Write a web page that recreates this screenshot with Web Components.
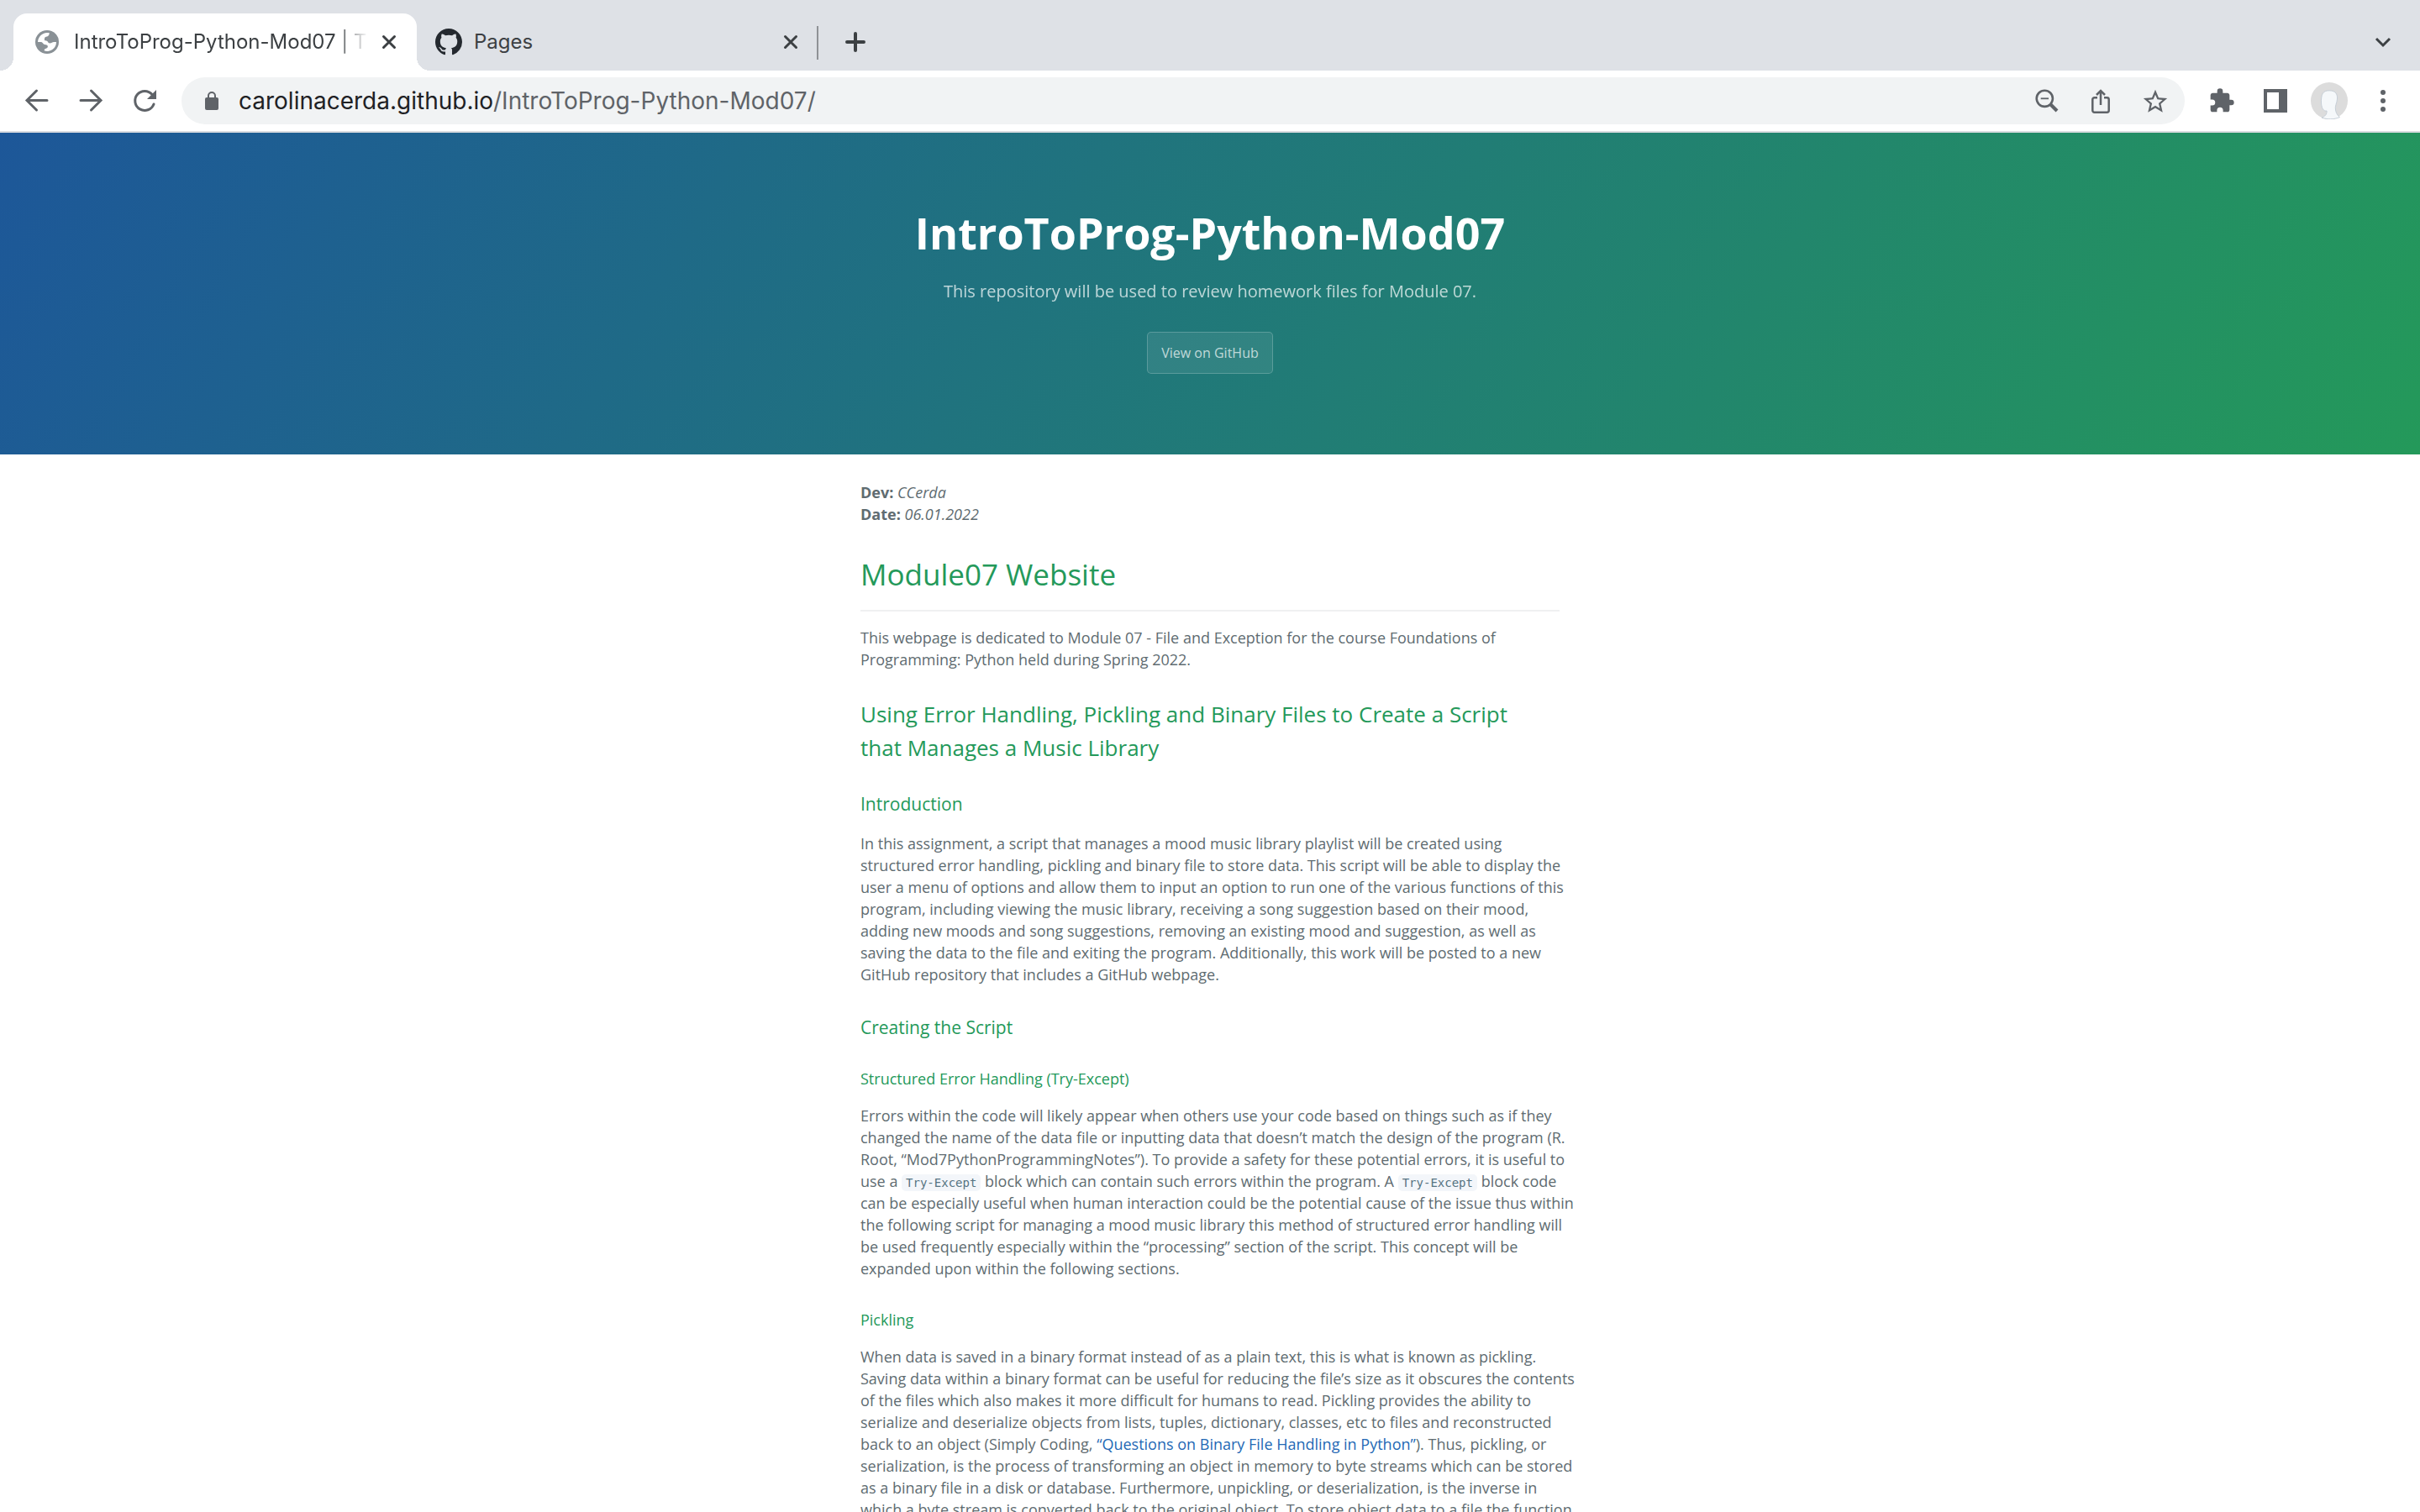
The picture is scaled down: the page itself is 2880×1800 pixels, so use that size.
<!DOCTYPE html>
<html lang="en"><head><meta charset="utf-8"><title>IntroToProg-Python-Mod07</title>
<style>
html,body{margin:0;height:100%}
body{overflow:hidden;background:#fff}
</style></head><body>
<browser-window>
  <tab-strip slot="chrome">
    <browser-tab active><svg slot="icon" viewBox="0 0 28 28" width="28" height="28"><circle cx="14" cy="14" r="14" fill="#8a9196"/><path fill="#fff" d="M3 14C3.300 8 8 3.200 14 3h2.500c.5 2-.5 3.800-2.500 4.500-1.800.6-2.800.6-3 2-.1 1 .3 1.700-.3 2.500 1.500.4 3.500.4 4.300 1.800.4 1 .8 1.700 2.300 1.700 2 0 3-1.500 4.800-1.500H25A11 11 0 0 1 11 24.600c-.8-1.600.2-2.400 1.800-2.800 1.800-.6 2.200-1.800 2-3-.3-1.400-2-1.400-3.600-1.800C8.800 16.400 9 14 6.500 14z"/></svg>IntroToProg-Python-Mod07 | The</browser-tab>
    <browser-tab><svg slot="icon" viewBox="0 0 16 16" width="32" height="32"><path fill="#24292f" d="M8 0C3.580 0 0 3.580 0 8c0 3.540 2.290 6.530 5.470 7.590.4.070.55-.17.55-.38 0-.19-.01-.82-.01-1.490-2.010.37-2.530-.49-2.690-.94-.09-.23-.48-.94-.82-1.130-.28-.15-.68-.52-.01-.53.63-.01 1.080.58 1.230.82.72 1.210 1.870.87 2.330.66.07-.52.28-.87.51-1.070-1.780-.2-3.640-.89-3.640-3.950 0-.87.31-1.590.82-2.150-.08-.2-.36-1.020.08-2.120 0 0 .67-.21 2.200.82.64-.18 1.320-.27 2-.27s1.360.09 2 .27c1.530-1.040 2.200-.82 2.200-.82.44 1.100.16 1.920.08 2.120.51.56.82 1.270.82 2.150 0 3.070-1.870 3.750-3.650 3.950.29.25.54.73.54 1.480 0 1.070-.01 1.930-.01 2.200 0 .21.15.46.55.38A8.010 8.010 0 0 0 16 8c0-4.420-3.580-8-8-8z"/></svg>Pages</browser-tab>
  </tab-strip>
  <tool-bar slot="chrome"></tool-bar>
  <page-header>
    <span slot="title">IntroToProg-Python-Mod07</span>
    <span slot="tagline">This repository will be used to review homework files for Module 07.</span>
  </page-header>
  <page-article></page-article>
</browser-window>
<script>
function define(name, html){
  customElements.define(name, class extends HTMLElement{
    constructor(){
      super();
      const t=document.createElement('template');
      t.innerHTML=html;
      this.attachShadow({mode:'open'}).appendChild(t.content.cloneNode(true));
    }
  });
}
const buttonReset='button{appearance:none;border:0;background:none;padding:0;margin:0;display:grid;place-items:center;flex:none}svg{display:block}';

define('browser-window',`<style>
:host{display:flex;flex-direction:column;height:100vh;overflow:hidden}
header{flex:none;border-bottom:2px solid #dadce0}
main{flex:1;min-height:0;overflow:hidden}
</style><header><slot name="chrome"></slot></header><main><slot></slot></main>`);

define('tab-strip',`<style>
${buttonReset}
:host{display:flex;align-items:flex-end;height:84px;background:#dee1e6;padding:0 28px 0 16px;box-sizing:border-box}
.sep{width:2px;height:40px;background:#8f9296;margin-bottom:13px}
.new{margin:0 0 16px 30px;height:36px}
.menu{margin:0 0 16px auto;width:32px;height:36px}
</style><slot></slot><span class="sep"></span>
<button class="new" aria-label="New tab"><svg width="28" height="28" viewBox="0 0 28 28"><path d="M14 4v20M4 14h20" stroke="#3c4043" stroke-width="4" stroke-linecap="round" fill="none"/></svg></button>
<button class="menu" aria-label="Search tabs"><svg width="20" height="14" viewBox="0 0 20 14"><path d="M2 3l8 8 8-8" stroke="#3c4043" stroke-width="3" fill="none"/></svg></button>`);

define('browser-tab',`<style>
${buttonReset}
:host{display:flex;align-items:center;position:relative;width:476px;height:68px;box-sizing:border-box;padding:0 22px;color:#3c4043;font:24px/32px Inter,sans-serif;border-radius:16px 16px 0 0}
:host([active]){width:480px;background:#fff;padding:0 24px 0 26px}
:host([active])::before,:host([active])::after{content:"";position:absolute;bottom:0;width:16px;height:16px}
:host([active])::before{left:-16px;background:radial-gradient(circle at 0 0,transparent 16px,#fff 16px)}
:host([active])::after{right:-16px;background:radial-gradient(circle at 100% 0,transparent 16px,#fff 16px)}
.icon{display:flex;width:32px;margin-right:14px;flex:none}
.label{flex:1;min-width:0;overflow:hidden;white-space:nowrap;margin-right:16px}
:host([active]) .label{-webkit-mask-image:linear-gradient(90deg,#000 calc(100% - 40px),transparent);mask-image:linear-gradient(90deg,#000 calc(100% - 40px),transparent)}
</style><span class="icon"><slot name="icon"></slot></span><span class="label"><slot></slot></span>
<button aria-label="Close tab"><svg width="18" height="18" viewBox="0 0 18 18"><path d="M2.500 2.500l13 13M15.500 2.500l-13 13" stroke="#3c4043" stroke-width="3" stroke-linecap="round" fill="none"/></svg></button>`);

define('tool-bar',`<style>
${buttonReset}
:host{display:flex;align-items:center;height:72px;box-sizing:border-box;padding:0 22px 0 28px;background:#fff}
.nav{display:flex;gap:32px;margin-right:28px}
.nav button{width:32px;height:32px}
form{flex:1;min-width:0;display:flex;align-items:center;height:56px;border-radius:28px;background:#f1f3f4;padding:0 20px 0 28px;box-sizing:border-box;margin:0}
.url{flex:1;min-width:0;margin-left:24px;font:28px/36px Inter,sans-serif;color:#5f6368;white-space:nowrap}
.url b{font-weight:400;color:#202124}
.in,.out{display:flex}
.in{gap:32px}
.in button{width:32px;height:32px}
.out{gap:20px;margin-left:22px}
.out button{width:44px;height:44px}
</style>
<div class="nav">
<button aria-label="Back"><svg width="32" height="32" viewBox="0 0 32 32"><path d="M28 15.500H5M15.500 4L4 15.500 15.500 27" stroke="#5f6368" stroke-width="3" stroke-linecap="round" fill="none"/></svg></button>
<button aria-label="Forward"><svg width="32" height="32" viewBox="0 0 32 32"><path d="M4 15.500h23M16.500 4L28 15.500 16.500 27" stroke="#5f6368" stroke-width="3" stroke-linecap="round" fill="none"/></svg></button>
<button aria-label="Reload"><svg width="32" height="32" viewBox="0 0 32 32"><path d="M27 20A11.500 11.500 0 1 1 25 8.500" stroke="#5f6368" stroke-width="3" stroke-linecap="round" fill="none"/><path d="M30 3v11H19z" fill="#5f6368"/></svg></button>
</div>
<form><svg width="16" height="22" viewBox="0 0 16 22"><rect y="7" width="16" height="15" rx="2" fill="#5f6368"/><path d="M4 8V5a4 4 0 0 1 8 0v3" stroke="#5f6368" stroke-width="2" fill="none"/></svg>
<span class="url"><b>carolinacerda.github.io</b>/IntroToProg-Python-Mod07/</span>
<div class="in">
<button type="button" aria-label="Zoom"><svg width="32" height="32" viewBox="0 0 32 32"><circle cx="13.300" cy="13.300" r="9.600" stroke="#5f6368" stroke-width="2.600" fill="none"/><path d="M8.700 13.300h9.300" stroke="#5f6368" stroke-width="1.800"/><path d="M20 20l8 8" stroke="#5f6368" stroke-width="4"/></svg></button>
<button type="button" aria-label="Share"><svg width="32" height="32" viewBox="0 0 32 32"><path d="M12 12.300H8.500a2.200 2.200 0 0 0-2.200 2.200v13a2.200 2.200 0 0 0 2.200 2.200h15a2.200 2.200 0 0 0 2.200-2.200v-13a2.200 2.200 0 0 0-2.200-2.200H20M16 21V4M11 9l5-5 5 5" stroke="#5f6368" stroke-width="2.500" fill="none"/></svg></button>
<button type="button" aria-label="Bookmark"><svg width="34" height="34" viewBox="0 0 24 24"><path fill="#5f6368" d="M22 9.240l-7.190-.62L12 2 9.190 8.630 2 9.240l5.460 4.730L5.820 21 12 17.270 18.180 21l-1.630-7.030L22 9.240zM12 15.400l-3.760 2.270 1-4.280-3.320-2.880 4.380-.38L12 6.100l1.710 4.040 4.380.38-3.320 2.880 1 4.280L12 15.400z"/></svg></button>
</div></form>
<div class="out">
<button aria-label="Extensions"><svg width="32" height="32" viewBox="0 0 24 24"><path fill="#5f6368" d="M20.500 11H19V7c0-1.100-.9-2-2-2h-4V3.500a2.500 2.500 0 0 0-5 0V5H4c-1.100 0-2 .9-2 2v3.800h1.500a2.700 2.700 0 0 1 0 5.400H2V20c0 1.100.9 2 2 2h3.800v-1.500a2.700 2.700 0 0 1 5.400 0V22H17c1.100 0 2-.9 2-2v-4h1.500a2.500 2.500 0 0 0 0-5z"/></svg></button>
<button aria-label="Side panel"><svg width="28" height="28" viewBox="0 0 28 28"><path fill="#5f6368" fill-rule="evenodd" d="M0 0h28v28H0zM4 4v20h14V4z"/></svg></button>
<button aria-label="Profile"><svg width="44" height="44" viewBox="0 0 44 44"><circle cx="22" cy="22" r="22" fill="#dcdcdc"/><path d="M13 42c4-1.500 6.500-4 6-8-4 .5-6-3-6.500-9C12 14 14.500 9.800 22 9.800S32 14 31.500 20c-.4 5-3 8-2 13 .8 4 2.500 6.500 5 8.500-7 3-15 3-21.500.5z" fill="#f5f8fa" stroke="#c6ced6" stroke-width="1"/></svg></button>
<button aria-label="Menu"><svg width="8" height="28" viewBox="0 0 8 28"><g fill="#5f6368"><circle cx="4" cy="4" r="3"/><circle cx="4" cy="14" r="3"/><circle cx="4" cy="24" r="3"/></g></svg></button>
</div>`);

define('page-header',`<style>
:host{display:flex;flex-direction:column;align-items:center;padding:80px 96px 96px;background:linear-gradient(120deg,#1d5799,#24995a);color:#fff;font-family:"Open Sans",sans-serif;text-align:center}
h1{margin:0;font-size:52px;line-height:78px;font-weight:700}
p{margin:16px 0 33px;font-size:20px;line-height:30px;opacity:.7}
a{box-sizing:border-box;padding:12px 16px;border:1px solid rgba(255,255,255,.2);border-radius:5px;background:rgba(255,255,255,.08);color:rgba(255,255,255,.7);font-size:16px;line-height:24px;text-decoration:none}
</style><h1><slot name="title"></slot></h1><p><slot name="tagline"></slot></p><a href="#">View on GitHub</a>`);

define('page-article',`<style>
:host{display:block;max-width:832px;margin:0 auto;padding:32px 96px;color:#606c71;font:18px/26px "Open Sans",sans-serif}
p{margin:18px 0 32px;white-space:nowrap}
p:first-of-type{margin-top:0}
h1,h2,h3,h4{font-weight:400;color:#24995a;margin:32px 0 16px}
h1{font-size:35px;line-height:53px}
h2{font-size:26px;line-height:40px}
h3{font-size:21px;line-height:31px}
h4{font-size:18px;line-height:26px}
p + h3,p + h4{margin-top:35px}
hr{height:2px;border:0;margin:16px 0;background:#eff0f1}
a{color:#2469b5;text-decoration:none}
code{font:14px/16px "DejaVu Sans Mono",monospace;color:#567482;background:#f3f6fa;border-radius:5px;padding:2px 5px}
</style>
<p><strong>Dev:</strong> <em>CCerda</em><br><strong>Date:</strong> <em>06.01.2022</em></p>
<h1>Module07 Website</h1><hr>
<p>This webpage is dedicated to Module 07 - File and Exception for the course Foundations of<br>Programming: Python held during Spring 2022.</p>
<h2>Using Error Handling, Pickling and Binary Files to Create a Script<br>that Manages a Music Library</h2>
<h3>Introduction</h3>
<p>In this assignment, a script that manages a mood music library playlist will be created using<br>structured error handling, pickling and binary file to store data. This script will be able to display the<br>user a menu of options and allow them to input an option to run one of the various functions of this<br>program, including viewing the music library, receiving a song suggestion based on their mood,<br>adding new moods and song suggestions, removing an existing mood and suggestion, as well as<br>saving the data to the file and exiting the program. Additionally, this work will be posted to a new<br>GitHub repository that includes a GitHub webpage.</p>
<h3>Creating the Script</h3>
<h4>Structured Error Handling (Try-Except)</h4>
<p>Errors within the code will likely appear when others use your code based on things such as if they<br>changed the name of the data file or inputting data that doesn’t match the design of the program (R.<br>Root, “Mod7PythonProgrammingNotes”). To provide a safety for these potential errors, it is useful to<br>use a <code>Try-Except</code> block which can contain such errors within the program. A <code>Try-Except</code> block code<br>can be especially useful when human interaction could be the potential cause of the issue thus within<br>the following script for managing a mood music library this method of structured error handling will<br>be used frequently especially within the “processing” section of the script. This concept will be<br>expanded upon within the following sections.</p>
<h4>Pickling</h4>
<p>When data is saved in a binary format instead of as a plain text, this is what is known as pickling.<br>Saving data within a binary format can be useful for reducing the file’s size as it obscures the contents<br>of the files which also makes it more difficult for humans to read. Pickling provides the ability to<br>serialize and deserialize objects from lists, tuples, dictionary, classes, etc to files and reconstructed<br>back to an object (Simply Coding, <a href="#">“Questions on Binary File Handling in Python”</a>). Thus, pickling, or<br>serialization, is the process of transforming an object in memory to byte streams which can be stored<br>as a binary file in a disk or database. Furthermore, unpickling, or deserialization, is the inverse in<br>which a byte stream is converted back to the original object. To store object data to a file the function</p>`);
</script>
</body></html>
